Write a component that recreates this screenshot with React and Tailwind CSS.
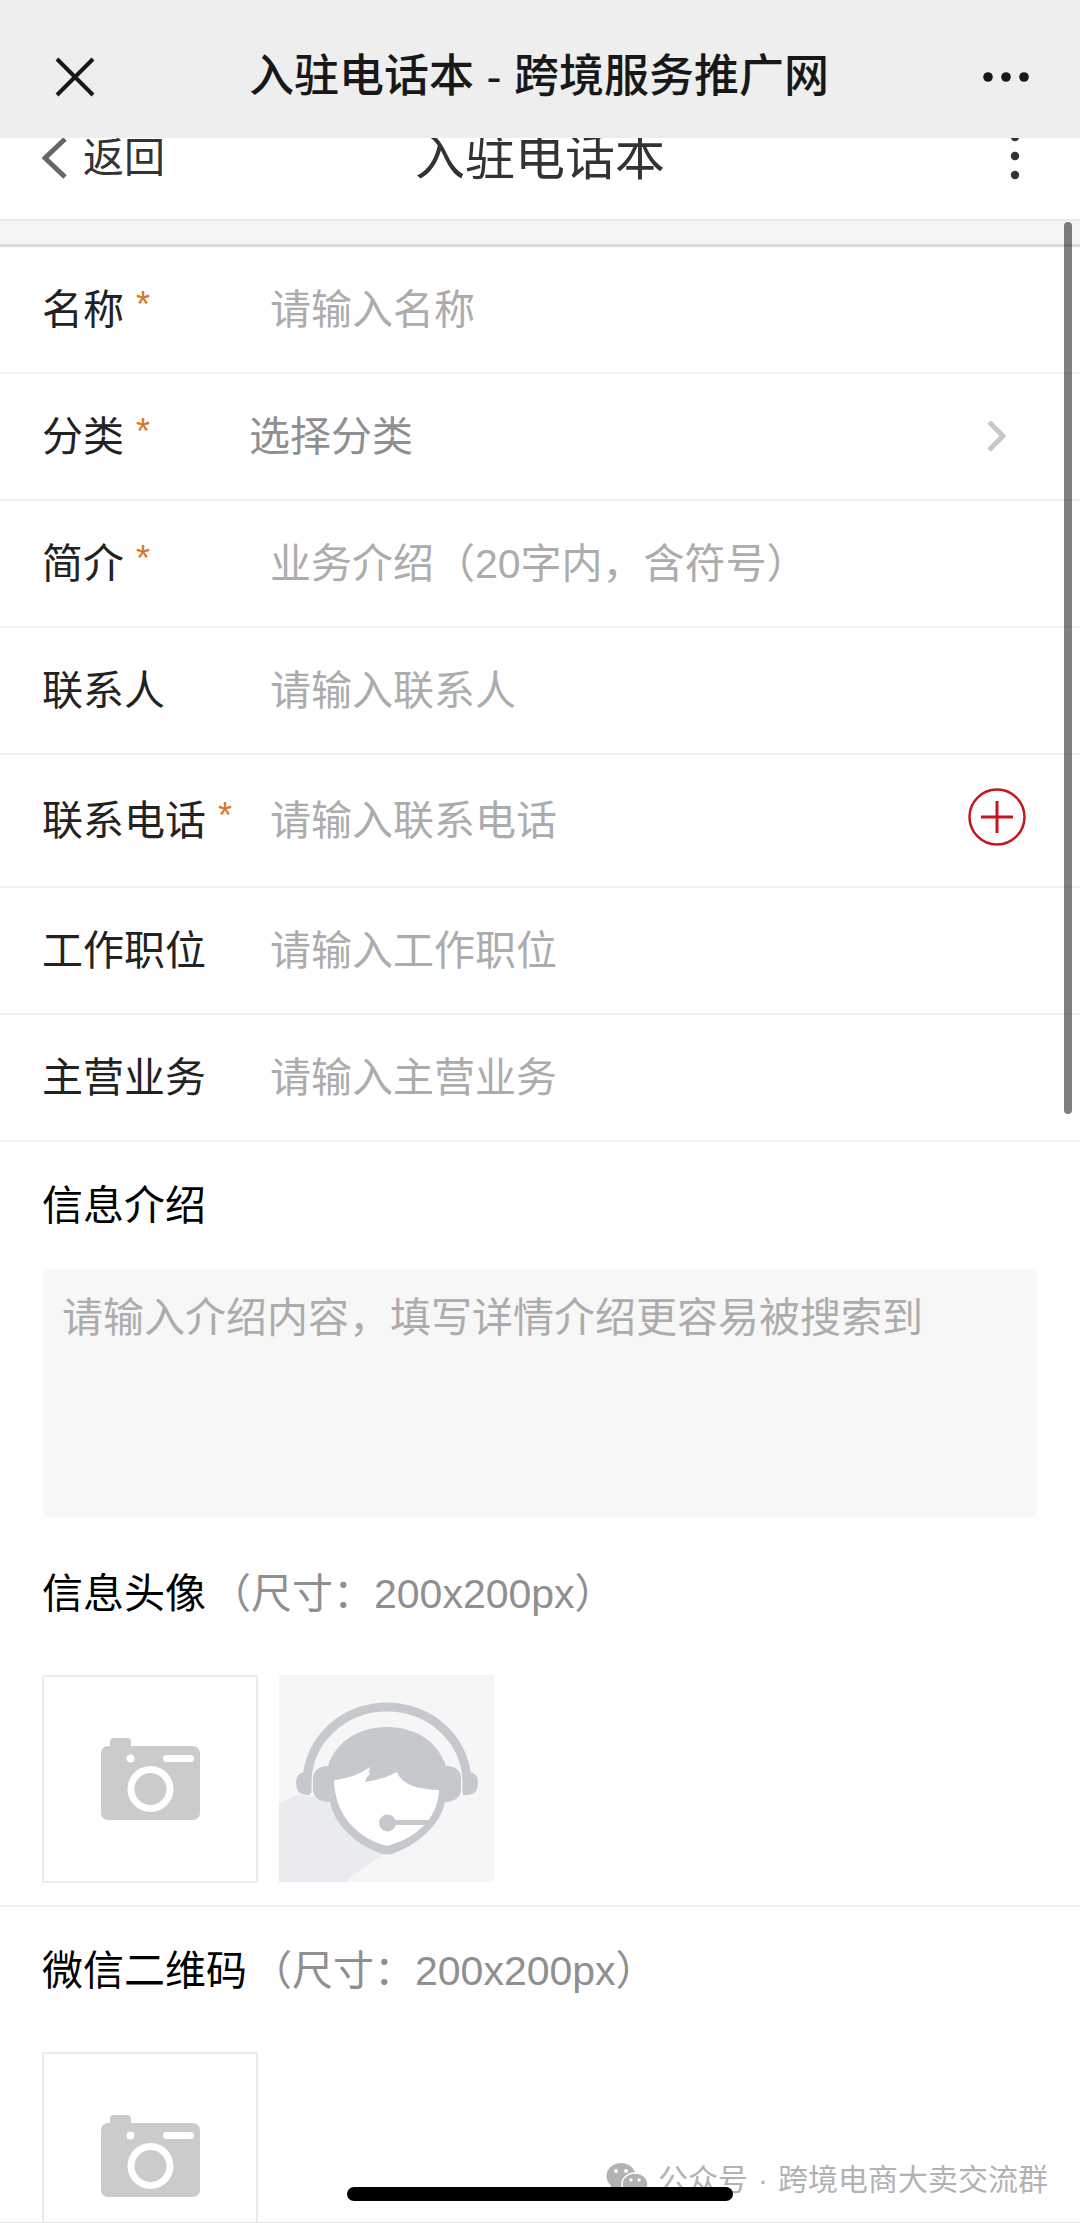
import { useState } from 'react';

const fields = [
  { id: 'name', label: '名称', required: true, placeholder: '请输入名称' },
  { id: 'category', label: '分类', required: true, type: 'select', placeholder: '选择分类' },
  { id: 'summary', label: '简介', required: true, placeholder: '业务介绍（20字内，含符号）' },
  { id: 'contact', label: '联系人', placeholder: '请输入联系人' },
  { id: 'phone', label: '联系电话', required: true, type: 'tel', placeholder: '请输入联系电话' },
  { id: 'position', label: '工作职位', placeholder: '请输入工作职位' },
  { id: 'business', label: '主营业务', placeholder: '请输入主营业务' },
];

const CameraIcon = () => (
  <svg width="99" height="82" viewBox="0 0 99 82" aria-hidden="true">
    <rect x="9" y="0" width="21" height="16" rx="4" fill="#cbcbcb" />
    <rect x="0" y="8" width="99" height="74" rx="7" fill="#cbcbcb" />
    <circle cx="29.5" cy="20.5" r="4" fill="#fff" />
    <rect x="62" y="17" width="31" height="7" rx="3.5" fill="#fff" />
    <circle cx="49.5" cy="51" r="19.5" fill="none" stroke="#fff" strokeWidth="7" />
  </svg>
);

const AvatarImage = () => (
  <svg width="215" height="207" viewBox="0 0 215 207" role="img" aria-label="头像">
    <rect width="215" height="207" fill="#f6f6f6" />
    <path d="M0 128 L18 120 L60 125 L104 179 C92 188 78 196 66 207 H0 Z" fill="#e9ebef" />
    <path d="M28 118 V108 A80 76 0 0 1 188 108 V118" fill="none" stroke="#c5c8cd" strokeWidth="9" />
    <path d="M31 120 H27 Q17 119 17 108 Q17 98 26 97 L31 100 Z" fill="#c5c8cd" />
    <path d="M184 120 H189 Q199 119 199 108 Q199 98 190 97 L184 100 Z" fill="#c5c8cd" />
    {/* head, hair and ear cups */}
    <path
      d="M49 91 C57 67 79 52 108 52 C137 52 159 67 167 91 C177 91 182 96 182 103 V114 C182 122 176 127 166 127 C161 152 136 170 118 177 Q108 182 98 177 C80 170 56 152 51 127 C40 127 34 122 34 114 V103 C34 96 40 91 49 91 Z"
      fill="#c5c8cd"
    />
    <path
      d="M55 105 Q76 103 91 92 Q89 97 91 99 Q87 102 86 107 Q103 105 118 97 C124 112 142 114 160 115 C159 146 134 164 108 171 C82 164 56 144 55 105 Z"
      fill="#fff"
    />
    <circle cx="108.5" cy="148" r="8.5" fill="#c5c8cd" />
    <path d="M110 145 H156 L146 150 H110 Z" fill="#c5c8cd" />
  </svg>
);

const WechatIcon = () => (
  <svg width="42" height="36" viewBox="0 0 42 36" aria-hidden="true">
    <ellipse cx="15" cy="14" rx="14.5" ry="13" fill="#b2b2b2" />
    <path d="M5 22 L4 30 L13 26 Z" fill="#b2b2b2" />
    <ellipse cx="29" cy="22" rx="13" ry="11" fill="#b2b2b2" stroke="#fff" strokeWidth="1.5" />
    <path d="M34 31 L38 35 L38 28 Z" fill="#b2b2b2" />
    <g fill="#fff">
      <circle cx="10" cy="9" r="2" />
      <circle cx="20" cy="9" r="2" />
      <circle cx="25" cy="18" r="1.7" />
      <circle cx="33" cy="18" r="1.7" />
    </g>
  </svg>
);

const UploadBox = ({ label }) => (
  <button
    type="button"
    aria-label={label}
    className="flex h-[208px] w-[216px] items-center justify-center border-2 border-[#ebebeb] bg-white"
  >
    <CameraIcon />
  </button>
);

const Field = ({ field, value, onChange }) => (
  <div
    className={`flex items-center border-b-2 border-[#f0f0f0] pl-[42px] pr-[54px] ${
      field.type === 'tel' ? 'h-[133px]' : 'h-[127px]'
    }`}
  >
    <label
      htmlFor={field.id}
      className={`flex shrink-0 gap-3 text-[#222] ${field.type === 'select' ? 'w-[207px]' : 'w-[228px]'}`}
    >
      {field.label}
      {field.required && <span className="text-[36px] leading-[48px] text-[#dc7622]">*</span>}
    </label>
    {field.type === 'select' ? (
      <>
        <select
          id={field.id}
          value={value}
          onChange={onChange}
          className="min-w-0 flex-1 appearance-none bg-transparent text-[#8f8f8f] outline-none"
        >
          <option value="">{field.placeholder}</option>
        </select>
        <svg width="20" height="32" viewBox="0 0 20 32" className="mr-5" aria-hidden="true">
          <path d="M3 1 L17 15 L3 29" fill="none" stroke="#c8c8c8" strokeWidth="5" />
        </svg>
      </>
    ) : (
      <input
        id={field.id}
        type={field.type || 'text'}
        value={value}
        onChange={onChange}
        placeholder={field.placeholder}
        className="min-w-0 flex-1 bg-transparent text-[#222] outline-none placeholder:text-[#acacac]"
      />
    )}
    {field.type === 'tel' && (
      <button type="button" aria-label="添加电话" className="pb-2">
        <svg width="58" height="58" viewBox="0 0 58 58" fill="none" stroke="#c4161c" strokeWidth="2.5">
          <circle cx="29" cy="29" r="27.5" />
          <path d="M13 29 H45 M29 13 V45" strokeWidth="3" />
        </svg>
      </button>
    )}
  </div>
);

const App = () => {
  const [values, setValues] = useState({});

  const handleChange = (id) => (e) => setValues({ ...values, [id]: e.target.value });

  return (
    <div className="relative flex h-screen flex-col overflow-hidden border-b border-[#e5e5e5] bg-white font-['Liberation_Sans','Noto_Sans_CJK_SC',sans-serif] text-[41px] leading-[58px]">
      {/* Browser bar */}
      <header className="relative z-10 flex h-[138px] shrink-0 items-center justify-between bg-[#eeeeee] pl-[55px] pr-[51px] pt-4">
        <button type="button" aria-label="关闭">
          <svg width="40" height="40" viewBox="0 0 40 40" stroke="#181818" strokeWidth="4">
            <path d="M2 2 L38 38 M38 2 L2 38" />
          </svg>
        </button>
        <h1 className="text-[45px] font-medium text-[#181818]">入驻电话本 - 跨境服务推广网</h1>
        <button type="button" aria-label="更多">
          <svg width="46" height="12" viewBox="0 0 46 12" fill="#181818">
            <circle cx="5" cy="6" r="4.8" />
            <circle cx="23" cy="6" r="4.8" />
            <circle cx="41" cy="6" r="4.8" />
          </svg>
        </button>
      </header>

      {/* Page title, partly scrolled under the bar */}
      <nav className="-mt-[44px] grid h-[127px] shrink-0 grid-cols-3 items-center border-b-2 border-[#ececec] px-[42px] pt-[2px] text-[#333]">
        <a href="#back" className="flex items-center gap-4">
          <svg width="25" height="42" viewBox="0 0 25 42" aria-hidden="true">
            <path d="M23 2 L3 21 L23 40" fill="none" stroke="#666" strokeWidth="5" />
          </svg>
          返回
        </a>
        <h2 className="text-center text-[50px]">入驻电话本</h2>
        <button type="button" aria-label="菜单" className="mr-[18px] justify-self-end">
          <svg width="10" height="48" viewBox="0 0 10 48" fill="#333">
            <circle cx="5" cy="3" r="4.2" />
            <circle cx="5" cy="22" r="4.2" />
            <circle cx="5" cy="41" r="4.2" />
          </svg>
        </button>
      </nav>

      <form className="min-h-0 flex-1 overflow-y-auto [scrollbar-width:none]" onSubmit={(e) => e.preventDefault()}>
        <div className="h-[26px] border-b-3 border-[#dcdcdc] bg-[#f5f5f5]" />
        {fields.map((field) => (
          <Field key={field.id} field={field} value={values[field.id] || ''} onChange={handleChange(field.id)} />
        ))}

        <section className="px-[42px]">
          <label htmlFor="intro" className="flex h-[127px] items-center text-black">
            信息介绍
          </label>
          <textarea
            id="intro"
            value={values.intro || ''}
            onChange={handleChange('intro')}
            placeholder="请输入介绍内容，填写详情介绍更容易被搜索到"
            className="block h-[248px] w-full resize-none rounded-lg bg-[#f7f7f7] px-5 py-5 outline-none placeholder:text-[#acacac]"
          />
        </section>

        <section className="mt-[13px] border-b-2 border-[#f0f0f0] px-[42px] pb-[22px]">
          <h3 className="flex h-[127px] items-center gap-1">
            信息头像<span className="text-[#8f8f8f]">（尺寸：200x200px）</span>
          </h3>
          <div className="flex gap-[21px] pt-[18px]">
            <UploadBox label="上传头像" />
            <AvatarImage />
          </div>
        </section>

        <section className="px-[42px]">
          <h3 className="flex h-[127px] items-center gap-1">
            微信二维码<span className="text-[#8f8f8f]">（尺寸：200x200px）</span>
          </h3>
          <div className="flex pt-[18px]">
            <UploadBox label="上传二维码" />
          </div>
        </section>
      </form>

      {/* Scroll thumb */}
      <div className="absolute right-2 top-[222px] z-10 h-[892px] w-2 rounded-full bg-black/50" />

      <div className="absolute bottom-[22px] right-8 flex items-center gap-[10px] text-[30px] leading-[40px] text-[#b2b2b2]">
        <WechatIcon />
        <span>公众号</span>
        <span>·</span>
        <span>跨境电商大卖交流群</span>
      </div>

      {/* Home indicator */}
      <div className="absolute bottom-[21px] left-1/2 h-[14px] w-[386px] -translate-x-1/2 rounded-full bg-black" />
    </div>
  );
};

export default App;
